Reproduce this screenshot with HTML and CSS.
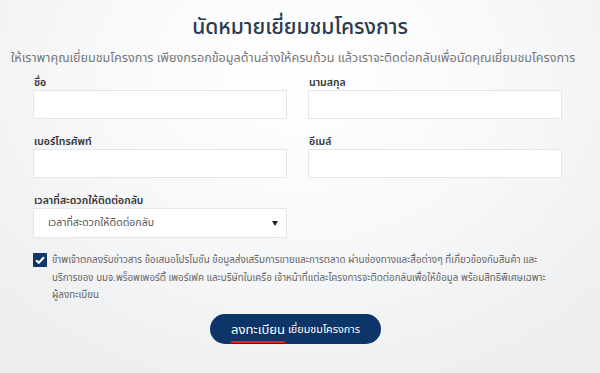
FILE: index.html
```html
<!DOCTYPE html>
<html lang="th">
<head>
<meta charset="utf-8">
<link rel="stylesheet" href="styles.css">
</head>
<body>
<div class="page">
  <h1 class="title">นัดหมายเยี่ยมชมโครงการ</h1>
  <p class="subtitle">ให้เราพาคุณเยี่ยมชมโครงการ เพียงกรอกข้อมูลด้านล่างให้ครบถ้วน แล้วเราจะติดต่อกลับเพื่อนัดคุณเยี่ยมชมโครงการ</p>
  <form class="form">
    <div class="grid">
      <label class="field"><span class="label">ชื่อ</span><span class="input"></span></label>
      <label class="field"><span class="label">นามสกุล</span><span class="input"></span></label>
      <label class="field"><span class="label">เบอร์โทรศัพท์</span><span class="input"></span></label>
      <label class="field"><span class="label">อีเมล์</span><span class="input"></span></label>
      <label class="field"><span class="label">เวลาที่สะดวกให้ติดต่อกลับ</span>
        <span class="input select"><span class="select-text">เวลาที่สะดวกให้ติดต่อกลับ</span><span class="caret"></span></span>
      </label>
    </div>
    <div class="consent">
      <span class="checkbox"><svg width="10" height="8" viewBox="0 0 10 8"><path d="M1 4.2 L3.8 6.8 L9 1.2" fill="none" stroke="#fff" stroke-width="2"/></svg></span>
      <p class="consent-text">ข้าพเจ้าตกลงรับข่าวสาร ข้อเสนอโปรโมชั่น ข้อมูลส่งเสริมการขายและการตลาด ผ่านช่องทางและสื่อต่างๆ ที่เกี่ยวข้องกับสินค้า และบริการของ บมจ.พร็อพเพอร์ตี้ เพอร์เฟค และบริษัทในเครือ เจ้าหน้าที่แต่ละโครงการจะติดต่อกลับเพื่อให้ข้อมูล พร้อมสิทธิพิเศษเฉพาะ ผู้ลงทะเบียน</p>
    </div>
    <div class="actions">
      <button type="button" class="btn"><span class="btn-main">ลงทะเบียน</span> <span class="btn-sub">เยี่ยมชมโครงการ</span></button>
    </div>
  </form>
</div>
</body>
</html>
```
FILE: styles.css
```css
* { box-sizing: border-box; }
html, body { margin: 0; height: 100%; }
body {
  font-family: "Noto Sans", "Noto Sans Thai", "DejaVu Sans", sans-serif;
  background: radial-gradient(ellipse 70% 90% at 50% 20%, #ffffff 0%, #f8f9fa 45%, #eceef0 100%);
  color: #333;
}
.page { width: 600px; height: 373px; overflow: hidden; }
.title {
  margin: 0;
  padding-top: 11px;
  text-align: center;
  font-size: 21px;
  font-weight: 500;
  color: #2b3a4f;
  line-height: 30px;
}
.subtitle {
  margin: 7px 0 0;
  text-align: center;
  white-space: nowrap;
  font-size: 12.6px;
  color: #777;
  line-height: 20px;
  padding-right: 14px;
}
.form { padding: 0 37px 0 33px; }
.grid {
  display: grid;
  grid-template-columns: 254px 254px;
  column-gap: 21px;
  row-gap: 15px;
  margin-top: 7px;
}
.field { display: flex; flex-direction: column; }
.label {
  font-size: 10.5px;
  font-weight: 600;
  color: #333;
  line-height: 15px;
  padding-left: 1px;
  margin-bottom: 0;
}
.input {
  display: block;
  height: 29px;
  background: #fff;
  border: 1px solid #e4e6e8;
}
.select {
  display: flex;
  align-items: center;
  justify-content: space-between;
  height: 30px;
  padding: 0 8px 0 14px;
}
.select-text { font-size: 10.5px; color: #555; }
.caret {
  width: 0; height: 0;
  border-left: 3px solid transparent;
  border-right: 3px solid transparent;
  border-top: 5px solid #222;
}
.consent {
  display: flex;
  align-items: flex-start;
  gap: 5px;
  margin-top: 14px;
}
.checkbox {
  flex: none;
  width: 14px; height: 14px;
  background: #0e3767;
  border-radius: 1px;
  display: flex; align-items: center; justify-content: center;
  margin-top: 1px;
}
.consent-text {
  margin: -1px 0 0;
  width: 500px;
  font-size: 9.8px;
  line-height: 17.5px;
  color: #666;
}
.actions { display: flex; justify-content: center; margin-top: 10px; }
.btn {
  width: 171px; height: 30px;
  border: none;
  border-radius: 15px;
  background: #0d3568;
  color: #fff;
  font-family: inherit;
  padding: 0;
  display: flex; align-items: center; justify-content: center; gap: 3px;
  margin-left: -5px;
}
.btn-main {
  font-size: 13px;
  position: relative;
  line-height: 18px;
}
.btn-main::after {
  content: "";
  position: absolute;
  left: 0; right: 0; bottom: -5px;
  height: 2px;
  background: #e02424;
}
.btn-sub { font-size: 10.8px; line-height: 18px; }
```
